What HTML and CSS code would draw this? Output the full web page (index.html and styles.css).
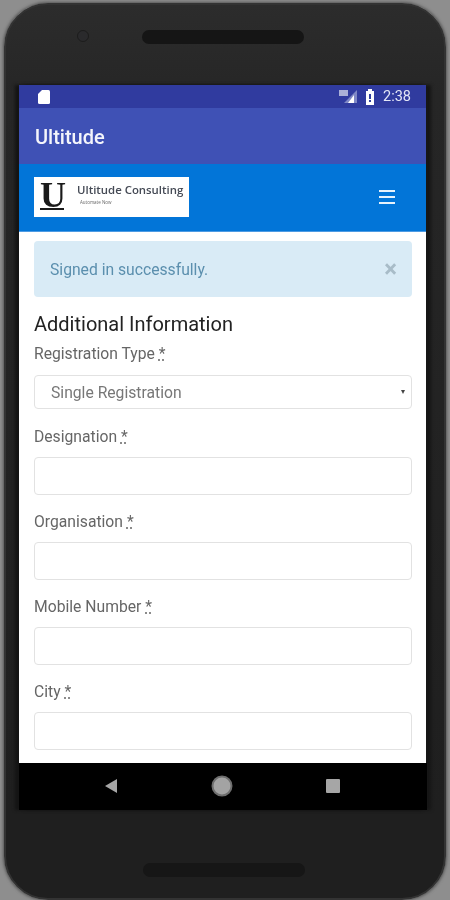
FILE: index.html
```html
<!DOCTYPE html>
<html lang="en">
<head>
<meta charset="utf-8">
<title>Ultitude</title>
<link rel="stylesheet" href="styles.css">
</head>
<body>
<div class="phone">
  <div class="bezel-top">
    <span class="camera"></span>
    <span class="speaker"></span>
  </div>
  <div class="screen">
    <div class="status">
      <svg class="sd" width="14" height="16" viewBox="0 0 14 16"><path d="M5 1h6.500a1.500 1.500 0 0 1 1.500 1.500v11a1.500 1.500 0 0 1-1.500 1.500h-9a1.500 1.500 0 0 1-1.500-1.500V5z" fill="#fff"/></svg>
      <span class="status-right">
        <svg width="19" height="15" viewBox="0 0 19 15"><path d="M0 1h9v6H0z" fill="#aab0d8"/><path d="M18 1v13H5z" fill="#7f88c6"/><path d="M9 14l6-8v8z" fill="#fff"/></svg>
        <svg class="battery" width="10" height="16" viewBox="0 0 10 16"><path d="M3 0h4v2h2v14H1V2h2z" fill="#fff"/><path d="M4 5h2v5H4zM4 11h2v2H4z" fill="#303f9f"/></svg>
        <span class="clock">2:38</span>
      </span>
    </div>
    <div class="appbar">Ultitude</div>
    <div class="navbar">
      <div class="logo">
        <div class="logo-mark"><span class="logo-u">U</span></div>
        <div class="logo-text">
          <span class="logo-name">Ultitude Consulting</span>
          <span class="logo-tag">Automate Now</span>
        </div>
      </div>
      <svg class="burger" width="18" height="16" viewBox="0 0 18 16"><path d="M1 2h16M1 8h16M1 14h16" stroke="#e6f2fc" stroke-width="2"/></svg>
    </div>
    <div class="content">
      <div class="alert">
        <span>Signed in successfully.</span>
        <span class="close">×</span>
      </div>
      <h2 class="title">Additional Information</h2>
      <div class="field field-select">
        <label class="label">Registration Type <abbr class="req">*</abbr></label>
        <div class="select"><span>Single Registration</span><span class="caret"></span></div>
      </div>
      <div class="field field-first">
        <label class="label">Designation <abbr class="req">*</abbr></label>
        <div class="input"></div>
      </div>
      <div class="field">
        <label class="label">Organisation <abbr class="req">*</abbr></label>
        <div class="input"></div>
      </div>
      <div class="field">
        <label class="label">Mobile Number <abbr class="req">*</abbr></label>
        <div class="input"></div>
      </div>
      <div class="field">
        <label class="label">City <abbr class="req">*</abbr></label>
        <div class="input"></div>
      </div>
    </div>
    <div class="softkeys">
      <svg width="14" height="16" viewBox="0 0 14 16"><path d="M13 1v14L1 8z" fill="#a6a6a6"/></svg>
      <svg width="22" height="22" viewBox="0 0 22 22"><circle cx="11" cy="11" r="9.500" fill="#a3a3a3" stroke="#6e6e6e" stroke-width="2"/></svg>
      <svg width="14" height="14" viewBox="0 0 14 14"><rect width="14" height="14" rx="1" fill="#a6a6a6"/></svg>
    </div>
  </div>
  <div class="bezel-bottom">
    <span class="speaker speaker-bottom"></span>
  </div>
</div>
</body>
</html>
```

FILE: styles.css
```css
* { box-sizing: border-box; }
html, body { margin: 0; padding: 0; }
body {
  width: 450px;
  height: 900px;
  overflow: hidden;
  background: #8e8e8e;
  font-family: Roboto, "Liberation Sans", sans-serif;
}
.phone {
  width: 442px;
  height: 897px;
  margin: 3px 0 0 4px;
  background: linear-gradient(#2c2c2c, #262626 10%, #1f1f1f 90%, #1f1f1f);
  border: 2px solid #333;
  border-radius: 44px;
  box-shadow: 0 0 3px 1px #555;
  padding: 0 17px 0 13px;
  filter: blur(0.45px);
}
.bezel-top {
  height: 80px;
  display: flex;
  align-items: flex-start;
  padding-top: 25px;
}
.camera {
  width: 12px;
  height: 12px;
  border-radius: 50%;
  background: #2a2a2c;
  border: 1px solid #1c1c1c;
  margin: 0 0 0 58px;
}
.speaker {
  width: 162px;
  height: 14px;
  border-radius: 7px;
  background: #151515;
  margin: 0 0 0 53px;
}
.screen {
  width: 407px;
  box-shadow: -4px 0 3px #141414, 5px 0 3px #161616;
}
.status {
  height: 23px;
  background: #303b9f;
  display: flex;
  justify-content: space-between;
  align-items: center;
  padding: 0 15px 0 18px;
}
.status-right { display: flex; align-items: center; gap: 7px; }
.clock { color: #e4e7f6; font-size: 14.500px; font-weight: 400; margin-left: 1px; }
.appbar {
  height: 56px;
  background: #3f51b5;
  color: #f4f5fb;
  font-size: 20px;
  font-weight: 500;
  padding: 16px 0 0 16px;
  line-height: 26px;
}
.navbar {
  height: 68px;
  background: #0275d8;
  display: flex;
  align-items: center;
  justify-content: space-between;
  padding: 0 30px 2px 15px;
  border-bottom: 1px solid #4d9be3;
}
.logo {
  width: 155px;
  height: 40px;
  background: #fff;
  display: flex;
}
.logo-mark {
  width: 37px;
  padding: 3px 0 0 6px;
}
.logo-u {
  display: block;
  width: 24px;
  height: 30px;
  font-family: "Liberation Serif", serif;
  font-weight: 700;
  font-size: 36px;
  line-height: 30px;
  color: #1a1a1a;
  border-bottom: 2px solid #1a1a1a;
  text-align: center;
}
.logo-text { display: flex; flex-direction: column; padding: 5px 0 0 6px; }
.logo-name { font-family: "Open Sans", sans-serif; font-size: 11.400px; line-height: 16px; color: #454a55; white-space: nowrap; font-weight: 600; }
.logo-tag { font-family: "Open Sans", sans-serif; font-size: 4.500px; line-height: 9px; color: #666; padding-left: 3px; }
.content {
  height: 531px;
  background: #fff;
  padding: 9px 14px 0 15px;
  overflow: hidden;
}
.alert {
  height: 56px;
  background: #d9ebf6;
  border-radius: 4px;
  color: #5b8fae;
  font-size: 15.700px;
  display: flex;
  justify-content: space-between;
  align-items: center;
  padding: 0 15px 0 16px;
}
.close { color: #a8bcc8; font-size: 24px; font-weight: 700; line-height: 1; }
.title {
  margin: 15px 0 0;
  font-size: 20px;
  font-weight: 400;
  line-height: 24px;
  color: #222;
}
.field { margin-top: 18px; }
.field-select { margin-top: 9px; }
.field-first { margin-top: 19px; }
.label {
  display: block;
  font-size: 15.700px;
  line-height: 18px;
  color: #666;
}
.req { color: #666; text-decoration: underline dotted; }
.select {
  margin-top: 12px;
  height: 34px;
  border: 1px solid #e2e2e2;
  border-radius: 4px;
  display: flex;
  justify-content: space-between;
  align-items: center;
  padding: 0 6px 0 16px;
  color: #777;
  font-size: 15.700px;
}
.caret {
  width: 0;
  height: 0;
  border-left: 2.500px solid transparent;
  border-right: 2.500px solid transparent;
  border-top: 4px solid #444;
}
.input {
  margin-top: 11px;
  height: 38px;
  border: 1px solid #e2e2e2;
  border-radius: 4px;
}
.softkeys {
  height: 47px;
  width: 408px;
  background: #000;
  display: grid;
  grid-template-columns: 14px 22px 14px;
  justify-content: center;
  column-gap: 93px;
  align-items: center;
  padding: 0 3px 2px 0;
}
.bezel-bottom {
  display: flex;
  padding-top: 53px;
}
.speaker-bottom { margin-left: 124px; background: #161616; }
```
